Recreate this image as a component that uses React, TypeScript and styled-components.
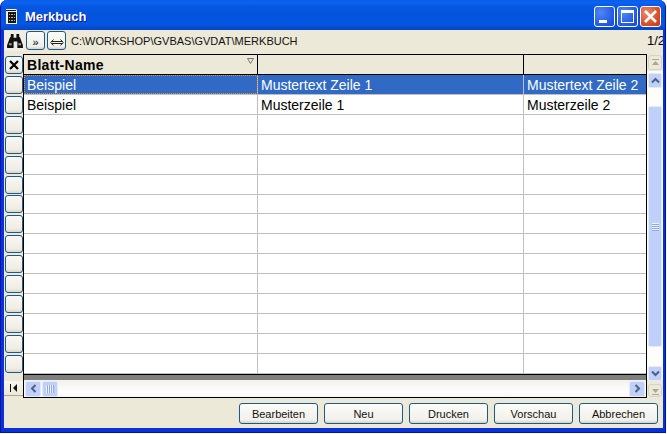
import styled, { createGlobalStyle } from 'styled-components'

const GlobalStyle = createGlobalStyle`
	html, body {
		margin: 0;
		padding: 0;
		background: #fff;
	}
`

const COLS = '234px 266px 122px'

const rows = [
	['Beispiel', 'Mustertext Zeile 1', 'Mustertext Zeile 2'],
	['Beispiel', 'Musterzeile 1', 'Musterzeile 2'],
	...Array.from({ length: 13 }, () => ['', '', '']),
]

const App = () => {
	return (
		<Window>
			<GlobalStyle />
			<TitleBar>
				<AppIcon width="16" height="16" viewBox="0 0 16 16">
					<path d="M2 0h10l1 1v14H2z" fill="#f4f2e8" />
					<path d="M2 1h10v1H2zM4 3h8v11H4z" fill="#161616" />
					<path d="M5 5h1v1H5zM7 5h2v1H7zM10 5h1v1h-1zM5 8h1v1H5zM7 8h2v1H7zM10 8h1v1h-1zM5 11h1v1H5zM7 11h2v1H7zM10 11h1v1h-1z" fill="#b8b4a4" />
				</AppIcon>
				<Title>Merkbuch</Title>
				<WindowButtons>
					<WindowButton>
						<svg width="21" height="21" viewBox="0 0 21 21">
							<path d="M5 14h8v3H5z" fill="#fff" />
						</svg>
					</WindowButton>
					<WindowButton>
						<svg width="21" height="21" viewBox="0 0 21 21">
							<path d="M4 4h13v13H4zM5 7v9h11V7z" fill="#fff" fillRule="evenodd" />
						</svg>
					</WindowButton>
					<WindowButton $close>
						<svg width="21" height="21" viewBox="0 0 21 21">
							<path d="M5 5l11 11M16 5L5 16" stroke="#fff" strokeWidth="2.6" />
						</svg>
					</WindowButton>
				</WindowButtons>
			</TitleBar>
			<Client>
				<Toolbar>
					<FindButton>
						<svg width="16" height="14" viewBox="0 0 17 15">
							<path d="M4 0h3v4h3V0h3v3l1 1 3 8v3h-6V8H7v7H0v-3l3-8 1-1z" fill="#101010" />
							<path d="M2 10h3v2H2zM12 10h3v2h-3z" fill="#9a9a9a" />
						</svg>
					</FindButton>
					<ToolButton>
						<Chevrons>»</Chevrons>
					</ToolButton>
					<ToolButton>
						<svg width="14" height="7" viewBox="0 0 14 7">
							<path
								d="M3.5 0.5L0.7 3.5l2.8 3M10.5 0.5l2.8 3-2.8 3M1.5 2.5h11M1.5 4.5h11"
								fill="none"
								stroke="#222"
								strokeWidth="1"
							/>
						</svg>
					</ToolButton>
					<PathText>C:\WORKSHOP\GVBAS\GVDAT\MERKBUCH</PathText>
					<PageText>1/2</PageText>
				</Toolbar>
				<Body>
					<RecordColumn>
						<RecordButton>
							<svg width="10" height="10" viewBox="0 0 10 10">
								<path d="M1 1l8 8M9 1L1 9" stroke="#000" strokeWidth="2.2" />
							</svg>
						</RecordButton>
						{rows.map((_, i) => (
							<RecordButton key={i} />
						))}
						<FirstButton>
							<svg width="9" height="8" viewBox="0 0 9 8">
								<path d="M1 0h1v8H1zM8 0v8L4 4z" fill="#111" />
							</svg>
						</FirstButton>
					</RecordColumn>
					<GridFrame>
						<Grid>
							<HeaderRow>
								<HeaderCell>
									Blatt-Name
									<SortMark width="7" height="6" viewBox="0 0 7 6">
										<path d="M0.5 0.5h6L3.5 5.5z" fill="none" stroke="#777" />
									</SortMark>
								</HeaderCell>
								<HeaderCell />
								<HeaderCell />
							</HeaderRow>
							{rows.map((row, i) => (
								<Row key={i} $selected={i === 0}>
									{row.map((text, j) => (
										<Cell key={j} $focus={i === 0 && j === 0}>
											{text}
										</Cell>
									))}
								</Row>
							))}
							<GridEnd />
						</Grid>
						<HScroll>
							<HArrow>
								<svg width="7" height="9" viewBox="0 0 7 9">
									<path d="M5.5 1L2 4.5 5.5 8" fill="none" stroke="#4d6185" strokeWidth="2" />
								</svg>
							</HArrow>
							<HThumb>
								<HGrip />
							</HThumb>
							<HArrow $end>
								<svg width="7" height="9" viewBox="0 0 7 9">
									<path d="M1.5 1L5 4.5 1.5 8" fill="none" stroke="#4d6185" strokeWidth="2" />
								</svg>
							</HArrow>
						</HScroll>
					</GridFrame>
					<VScroll>
						<PageArrow $top>
							<svg width="9" height="8" viewBox="0 0 9 8">
								<path d="M1 0h7v1H1zM4.5 2L8 6H1z" fill="#a8a898" />
							</svg>
						</PageArrow>
						<VArrow $gap={3}>
							<svg width="9" height="7" viewBox="0 0 9 7">
								<path d="M1 5.5L4.5 2 8 5.5" fill="none" stroke="#4d6185" strokeWidth="2" />
							</svg>
						</VArrow>
						<VThumb>
							<VGrip />
						</VThumb>
						<VArrow $gap={19}>
							<svg width="9" height="7" viewBox="0 0 9 7">
								<path d="M1 1.5L4.5 5 8 1.5" fill="none" stroke="#4d6185" strokeWidth="2" />
							</svg>
						</VArrow>
						<PageArrow>
							<svg width="9" height="8" viewBox="0 0 9 8">
								<path d="M1 7h7v1H1zM4.5 6L8 2H1z" fill="#a8a898" />
							</svg>
						</PageArrow>
					</VScroll>
				</Body>
				<Footer>
					<Button>Bearbeiten</Button>
					<Button>Neu</Button>
					<Button>Drucken</Button>
					<Button>Vorschau</Button>
					<Button>Abbrechen</Button>
				</Footer>
			</Client>
		</Window>
	)
}

const Window = styled.div`
	width: 666px;
	height: 433px;
	box-sizing: border-box;
	display: flex;
	flex-direction: column;
	background: #0831d9;
	border: 1px solid #00139c;
	border-top: 0;
	border-radius: 7px 7px 0 0;
	overflow: hidden;
	font-family: 'Liberation Sans', Arial, sans-serif;
	color: #000;
`

const TitleBar = styled.div`
	height: 30px;
	flex: none;
	box-sizing: border-box;
	display: flex;
	align-items: center;
	padding: 3px 4px 0 3px;
	background: linear-gradient(
		to bottom,
		#0a5ce8 0%,
		#0a64f0 8%,
		#0558e4 20%,
		#0353dc 50%,
		#0457e4 80%,
		#0445c4 100%
	);
`

const AppIcon = styled.svg`
	flex: none;
	margin-right: 5px;
`

const Title = styled.div`
	flex: 1;
	font-weight: bold;
	font-size: 13px;
	color: #fff;
	text-shadow: 1px 1px 0 #0f1089;
`

const WindowButtons = styled.div`
	display: flex;
	gap: 2px;
`

const WindowButton = styled.div<{ $close?: boolean }>`
	width: 21px;
	height: 21px;
	box-sizing: border-box;
	border: 1px solid #fff;
	border-radius: 3px;
	display: flex;
	align-items: center;
	justify-content: center;
	background: ${(p) =>
		p.$close
			? 'radial-gradient(circle at 30% 30%, #e88a6a, #d9502a 60%, #c23a14)'
			: 'radial-gradient(circle at 30% 30%, #4f86f5, #2a5ee6 60%, #1c46c8)'};

	svg {
		margin: -1px;
	}
`

const Client = styled.div`
	flex: 1;
	min-height: 0;
	margin: 0 2px 4px 3px;
	background: #ece9d8;
	display: flex;
	flex-direction: column;
	overflow: hidden;
`

const Toolbar = styled.div`
	height: 24px;
	flex: none;
	display: flex;
	align-items: center;
	padding-bottom: 3px;
	box-sizing: border-box;
`

const FindButton = styled.div`
	width: 21px;
	height: 20px;
	display: flex;
	align-items: center;
	justify-content: center;
	flex: none;
	background: #f1efe4;
`

const ToolButton = styled.div`
	width: 19px;
	height: 19px;
	box-sizing: border-box;
	margin-left: 1px;
	border: 1px solid #1d5a8c;
	border-radius: 3px;
	background: linear-gradient(to bottom, #fbfbf8, #f0efe8 85%, #d6d0c5);
	display: flex;
	align-items: center;
	justify-content: center;
	flex: none;

	& + & {
		margin-left: 2px;
	}

	svg {
		margin-top: 3px;
	}
`

const Chevrons = styled.span`
	font-size: 11px;
	line-height: 11px;
	margin-top: 3px;
`

const PathText = styled.div`
	margin-left: 5px;
	font-size: 11px;
	flex: 1;
	min-width: 0;
	white-space: nowrap;
	color: #111;
`

const PageText = styled.div`
	font-size: 13px;
	margin-right: -2px;
	white-space: nowrap;
`

const Body = styled.div`
	height: 344px;
	flex: none;
	display: flex;
	align-items: flex-start;
`

const RecordColumn = styled.div`
	width: 19px;
	flex: none;
	padding-top: 2px;
	display: flex;
	flex-direction: column;
	align-items: flex-start;
`

const RecordButton = styled.div`
	width: 18px;
	height: 18px;
	margin: 0 0 1.93px 1px;
	box-sizing: border-box;
	border: 1px solid #1d5a8c;
	border-radius: 3px;
	background: linear-gradient(to bottom, #f8f7f3, #efedE3 80%, #d9d5c8);
	display: flex;
	align-items: center;
	justify-content: center;
`

const FirstButton = styled.div`
	width: 19px;
	height: 15px;
	margin-top: 6px;
	display: flex;
	align-items: center;
	justify-content: center;
	background: linear-gradient(to bottom, #f7f6f0, #ece9d8);
	border-bottom: 1px solid #aca899;
	box-sizing: border-box;
`

const GridFrame = styled.div`
	width: 624px;
	height: 344px;
	flex: none;
	box-sizing: border-box;
	border: 1px solid #000;
	display: flex;
	flex-direction: column;
	overflow: hidden;
`

const Grid = styled.div`
	flex: 1;
	min-height: 0;
	background: #fff;
	font-size: 14px;
`

const HeaderRow = styled.div`
	display: grid;
	grid-template-columns: ${COLS};
	height: 20px;
	box-sizing: border-box;
	background: #ece9d8;
	border-bottom: 1px solid #000;
`

const HeaderCell = styled.div`
	position: relative;
	box-sizing: border-box;
	border-right: 1px solid #000;
	padding: 2px 0 0 3px;
	font-weight: bold;
	letter-spacing: 0.3px;
	white-space: nowrap;
	overflow: hidden;

	&:last-child {
		border-right: 0;
	}
`

const SortMark = styled.svg`
	position: absolute;
	top: 3px;
	right: 3px;
`

const Row = styled.div<{ $selected?: boolean }>`
	display: grid;
	grid-template-columns: ${COLS};
	height: 19.93px;
	box-sizing: border-box;
	background: ${(p) => (p.$selected ? '#316ac5' : '#fff')};
	color: ${(p) => (p.$selected ? '#fff' : '#000')};
	border-bottom: 1px solid #c0c0c0;
`

const Cell = styled.div<{ $focus?: boolean }>`
	box-sizing: border-box;
	border-right: 1px solid #c0c0c0;
	padding: 2px 0 0 3px;
	white-space: nowrap;
	overflow: hidden;
	line-height: 17px;
	outline: ${(p) => (p.$focus ? '1px dotted #f09020' : 'none')};
	outline-offset: -1px;

	&:last-child {
		border-right: 0;
	}
`

const GridEnd = styled.div`
	height: 6px;
	background: #808080;
	border-top: 1px solid #000;
	box-sizing: border-box;
`

const HScroll = styled.div`
	height: 17px;
	flex: none;
	display: flex;
	align-items: center;
	padding: 0 1px;
	background: linear-gradient(to bottom, #f3f1ec, #fefefe 70%, #f8f7f2);
`

const ArrowBox = styled.div`
	flex: none;
	box-sizing: border-box;
	border: 1px solid #e4ebfd;
	border-radius: 2px;
	background: #bfd1fa;
	display: flex;
	align-items: center;
	justify-content: center;
`

const HArrow = styled(ArrowBox)<{ $end?: boolean }>`
	width: 16px;
	height: 16px;
	margin-left: ${(p) => (p.$end ? 'auto' : '0')};
`

const VArrow = styled(ArrowBox)<{ $gap: number }>`
	height: 15px;
	margin: ${(p) => p.$gap}px 1px 0;
`

const HThumb = styled(ArrowBox)`
	width: 16px;
	height: 16px;
	margin-left: 1px;
`

const HGrip = styled.div`
	width: 8px;
	height: 8px;
	background: repeating-linear-gradient(to right, #eef3ff 0 1px, #8fa9e8 1px 2px);
`

const VScroll = styled.div`
	width: 16px;
	height: 344px;
	flex: none;
	background: linear-gradient(
		to bottom,
		#ece9d8 0,
		#ece9d8 17px,
		#fdfdfa 17px,
		#fdfdfa 326px,
		#ece9d8 326px
	);
	display: flex;
	flex-direction: column;
`

const PageArrow = styled.div<{ $top?: boolean }>`
	height: ${(p) => (p.$top ? '15px' : '13px')};
	margin: ${(p) => (p.$top ? '1px 1px 0' : '3px 1px 0')};
	flex: none;
	box-sizing: border-box;
	border: 1px solid #d6d3c4;
	border-radius: 3px;
	background: #ece9d8;
	display: flex;
	align-items: center;
	justify-content: center;
`

const VThumb = styled(ArrowBox)`
	height: 241px;
	margin: 18px 1px 0;
`

const VGrip = styled.div`
	width: 7px;
	height: 8px;
	background: repeating-linear-gradient(to bottom, #eef3ff 0 1px, #8fa9e8 1px 2px);
`

const Footer = styled.div`
	flex: 1;
	display: flex;
	justify-content: flex-end;
	align-items: flex-start;
	gap: 6px;
	padding: 5px 5px 0 0;
`

const Button = styled.div`
	width: 79px;
	height: 21px;
	box-sizing: border-box;
	border: 1px solid #1d5a8c;
	border-radius: 3px;
	background: linear-gradient(to bottom, #fbfbf8, #f2f1ea 85%, #d6d0c5);
	font-size: 11px;
	display: flex;
	align-items: center;
	justify-content: center;
	color: #111;
`

export default App
